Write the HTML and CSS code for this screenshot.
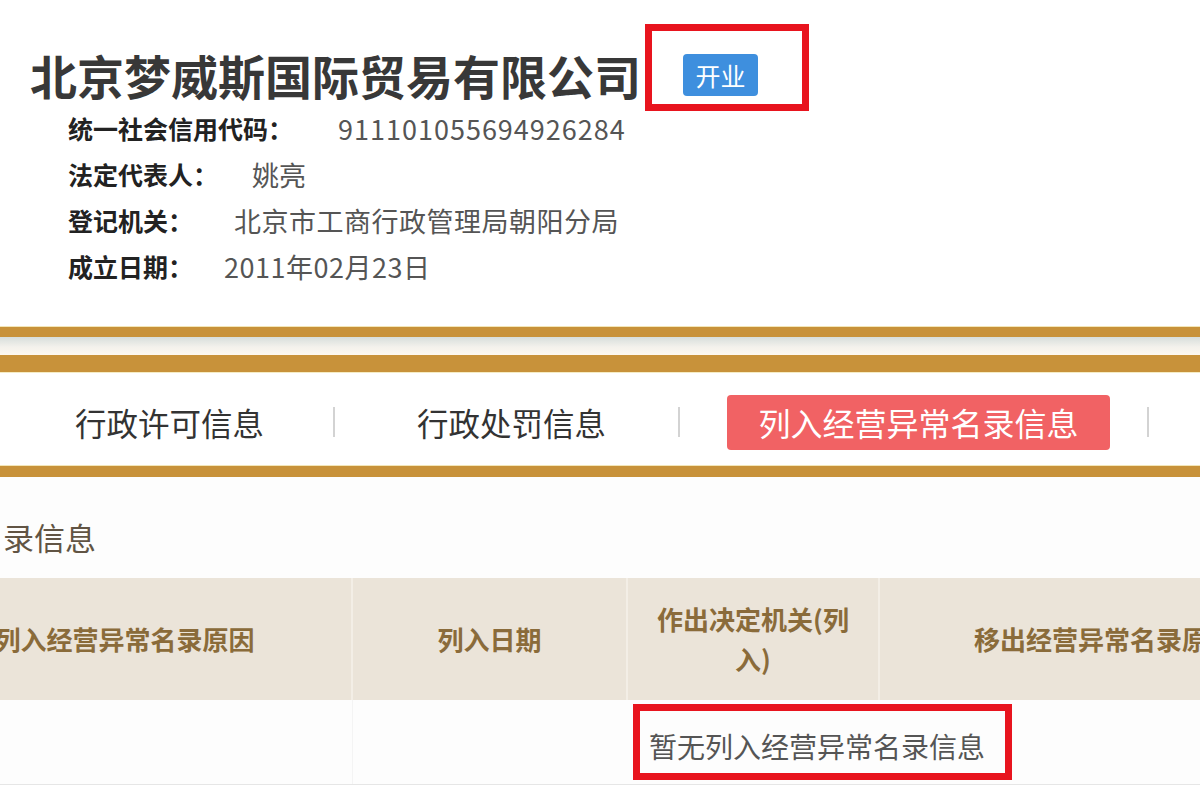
FILE: index.html
```html
<!DOCTYPE html>
<html lang="zh-CN">
<head>
<meta charset="utf-8">
<title>北京梦威斯国际贸易有限公司</title>
<link rel="stylesheet" href="styles.css">
</head>
<body>
<div class="page">
  <header class="head">
    <div class="company">
      <h1 class="name">北京梦威斯国际贸易有限公司</h1>
      <span class="mark mark-badge"><span class="badge">开业</span></span>
    </div>
    <div class="info">
      <div class="row"><span class="label">统一社会信用代码：</span><span class="value v-code">911101055694926284</span></div>
      <div class="row"><span class="label">法定代表人：</span><span class="value v-rep">姚亮</span></div>
      <div class="row"><span class="label">登记机关：</span><span class="value v-org">北京市工商行政管理局朝阳分局</span></div>
      <div class="row"><span class="label">成立日期：</span><span class="value v-date">2011年02月23日</span></div>
    </div>
  </header>

  <div class="bar bar-thin"></div>
  <div class="bar-gap"></div>
  <div class="bar bar-thick"></div>

  <nav class="tabs">
    <span class="tab tab-1">行政许可信息</span>
    <span class="sep sep-1"></span>
    <span class="tab tab-2">行政处罚信息</span>
    <span class="sep sep-2"></span>
    <span class="tab tab-active">列入经营异常名录信息</span>
    <span class="sep sep-3"></span>
  </nav>

  <div class="bar bar-mid"></div>

  <section class="section">
    <h2 class="section-title">录信息</h2>
    <table class="grid">
      <colgroup>
        <col class="c1"><col class="c2"><col class="c3"><col class="c4">
      </colgroup>
      <thead>
        <tr>
          <th>列入经营异常名录原因</th>
          <th>列入日期</th>
          <th class="th-wrap">作出决定机关(列入)</th>
          <th>移出经营异常名录原因</th>
        </tr>
      </thead>
      <tbody>
        <tr>
          <td></td>
          <td></td>
          <td colspan="2" class="empty"><span class="mark mark-empty">暂无列入经营异常名录信息</span></td>
        </tr>
      </tbody>
    </table>
  </section>
</div>
</body>
</html>
```

FILE: styles.css
```css
html, body {
  margin: 0;
  padding: 0;
  background: #ffffff;
}

body {
  width: 1200px;
  height: 800px;
  overflow: hidden;
  font-family: "Noto Sans CJK SC", "Microsoft YaHei", sans-serif;
  color: #333;
}

.page {
  width: 1200px;
}

/* ---------- header ---------- */
.head {
  padding-left: 30px;
  padding-top: 45px;
}

.company {
  display: flex;
  align-items: center;
  height: 60px;
}

.name {
  margin: 0;
  font-size: 47px;
  line-height: 60px;
  font-weight: 700;
  color: #383838;
  letter-spacing: 0;
}

.mark {
  position: relative;
  display: inline-block;
}

.mark::after {
  content: "";
  position: absolute;
  border: 7px solid #e8141e;
  pointer-events: none;
}

.mark-badge {
  margin-left: 42px;
}

.mark-badge::after {
  top: -30px;
  right: -51px;
  bottom: -15px;
  left: -38px;
}

.badge {
  display: block;
  width: 75px;
  height: 42px;
  line-height: 42px;
  text-align: center;
  font-size: 25px;
  color: #ffffff;
  background: #3e8fde;
  border-radius: 4px;
}

.info {
  padding-left: 38px;
}

.row {
  display: flex;
  align-items: center;
  height: 46px;
}

.label {
  font-size: 25px;
  font-weight: 700;
  color: #222;
}

.value {
  font-size: 27px;
  color: #555;
}

.v-code { margin-left: 45px; letter-spacing: 1px; }
.v-rep  { margin-left: 34px; }
.v-org  { margin-left: 41px; letter-spacing: 0.5px; }
.v-date { margin-left: 31px; letter-spacing: 0.5px; }

/* ---------- gold bars ---------- */
.bar {
  background: #c8923a;
}

.bar-thin {
  margin-top: 37px;
  height: 11px;
  border-top: 1px solid #f3e6b8;
  box-sizing: border-box;
}

.bar-gap {
  height: 18px;
  background: linear-gradient(#d7dedb, #f3f1ec 55%, #fdf8ef);
}

.bar-thick {
  height: 18px;
  border-bottom: 1px solid #f5ecc4;
  box-sizing: border-box;
}

.bar-mid {
  height: 12px;
  border-top: 1px solid #f3e6b8;
  box-sizing: border-box;
}

/* ---------- tabs ---------- */
.tabs {
  display: flex;
  align-items: center;
  height: 92px;
  padding-top: 6px;
  box-sizing: border-box;
}

.tab {
  font-size: 31.5px;
  line-height: 40px;
  color: #333;
}

.tab-1 { margin-left: 75px; }
.tab-2 { margin-left: 82px; }

.sep {
  width: 2px;
  height: 30px;
  background: #d3d3d3;
}

.sep-1 { margin-left: 69px; }
.sep-2 { margin-left: 72px; }
.sep-3 { margin-left: 37px; }

.tab-active {
  margin-left: 47px;
  width: 383px;
  height: 55px;
  line-height: 55px;
  text-align: center;
  font-size: 32px;
  color: #ffffff;
  background: #f16264;
  border-radius: 4px;
}

/* ---------- section ---------- */
.section {
  background: #fdfdfd;
  padding-top: 40px;
}

.section-title {
  margin: 0 0 21px 3px;
  font-size: 31px;
  line-height: 40px;
  font-weight: 400;
  color: #615444;
}

.grid {
  margin-left: -102px;
  width: 1430px;
  border-collapse: collapse;
  table-layout: fixed;
}

.c1 { width: 454px; }
.c2 { width: 275px; }
.c3 { width: 252px; }
.c4 { width: 449px; }

.grid th {
  height: 122px;
  padding: 0 20px;
  background: #ebe4d9;
  color: #8a6b3a;
  font-size: 26px;
  line-height: 40px;
  font-weight: 700;
  text-align: center;
  vertical-align: middle;
  border-left: 2px solid #f3eee6;
}

.grid th:first-child {
  border-left: none;
}

.grid td {
  height: 84px;
  padding: 0;
  border-bottom: 1px solid #e6e6e6;
  border-left: 1px solid #f4f4f4;
  vertical-align: middle;
}

.grid td:first-child {
  border-left: none;
}

.grid td.empty {
  padding-left: 22px;
  border-left: none;
}

.mark-empty {
  font-size: 28px;
  line-height: 36px;
  color: #555;
  top: 4px;
}

.mark-empty::after {
  top: -24px;
  right: -27px;
  bottom: -16px;
  left: -16px;
}
```
